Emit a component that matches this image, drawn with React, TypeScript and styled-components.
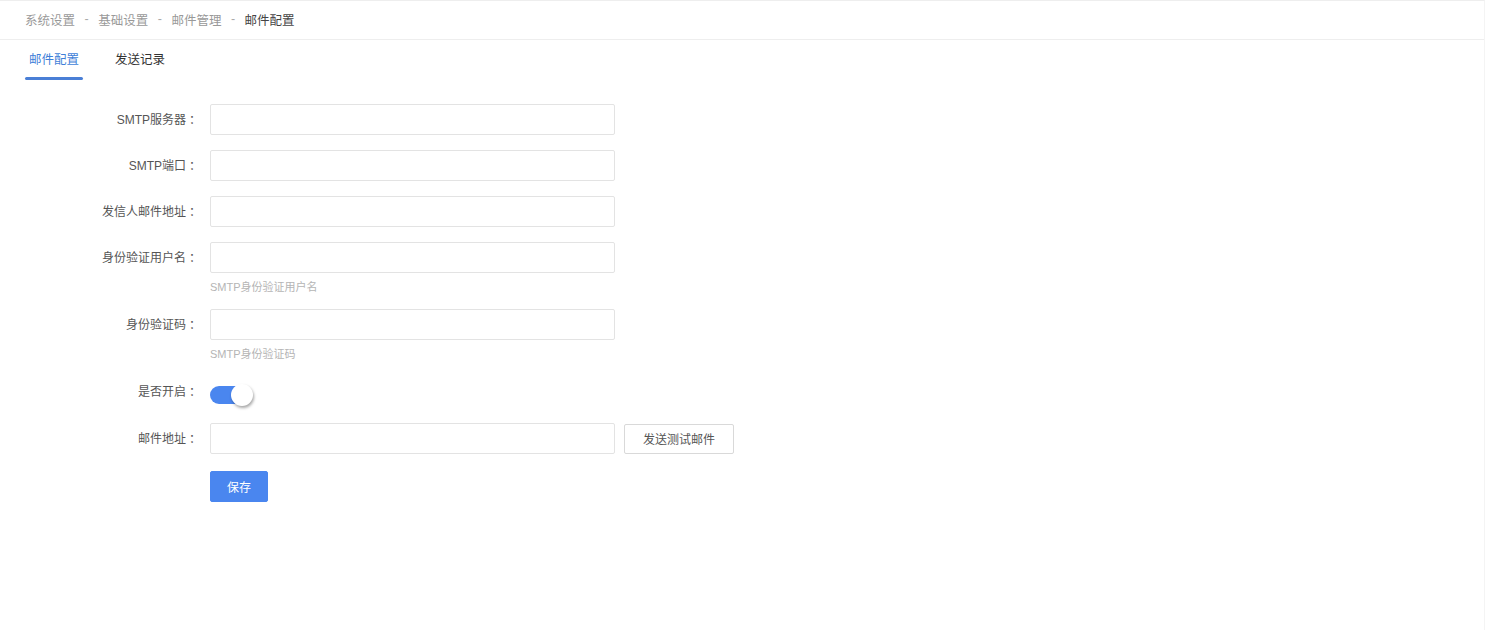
import React, { useState } from "react";
import styled, { createGlobalStyle } from "styled-components";

const Global = createGlobalStyle`
  html, body { margin: 0; padding: 0; background: #fff; }
  body { font-family: "Liberation Sans", "Noto Sans CJK SC", sans-serif; color: #333; }
  * { box-sizing: border-box; }
`;

const Page = styled.div`
  width: 1485px;
  min-height: 630px;
  border-top: 1px solid #eeeeee;
  border-right: 1px solid #f4f4f4;
`;

const Breadcrumb = styled.div`
  height: 39px;
  display: flex;
  align-items: center;
  padding-left: 25px;
  padding-bottom: 2px;
  font-size: 12.5px;
  border-bottom: 1px solid #eeeeee;
  color: #999;
`;

const Crumb = styled.span<{ $current?: boolean }>`
  color: ${(p) => (p.$current ? "#444" : "#999")};
`;

const Sep = styled.span`
  color: #aaa;
  margin: 0 9.5px;
`;

const Tabs = styled.div`
  display: flex;
  padding-left: 25px;
  height: 41px;
  gap: 28px;
`;

const Tab = styled.div<{ $active?: boolean }>`
  position: relative;
  font-size: 12.5px;
  padding: 9px 4px 0;
  color: ${(p) => (p.$active ? "#3f7fd8" : "#333")};
  cursor: pointer;
  &::after {
    content: "";
    display: ${(p) => (p.$active ? "block" : "none")};
    position: absolute;
    left: 0;
    right: 0;
    bottom: 1px;
    height: 3px;
    border-radius: 2px;
    background: #4a7fd6;
  }
`;

const Form = styled.div`
  padding-top: 23px;
  display: flex;
  flex-direction: column;
`;

const Row = styled.div<{ $mb?: number }>`
  display: flex;
  align-items: flex-start;
  margin-bottom: ${(p) => (p.$mb ?? 15)}px;
`;

const Label = styled.label`
  width: 198px;
  height: 31px;
  flex: none;
  display: flex;
  align-items: center;
  justify-content: flex-end;
  font-size: 12px;
  color: #555;
  line-height: 16px;
  white-space: nowrap;
`;

const Colon = styled.span`
  font-family: "Noto Sans CJK TC", "Noto Sans CJK SC", sans-serif;
  line-height: 16px;
`;

const Field = styled.div`
  margin-left: 12px;
  display: flex;
  flex-direction: column;
`;

const Inline = styled.div`
  display: flex;
  align-items: center;
  gap: 9px;
`;

const Input = styled.input`
  width: 405px;
  height: 31px;
  border: 1px solid #e3e3e3;
  border-radius: 2px;
  padding: 0 10px;
  font-size: 12px;
  outline: none;
  &:focus { border-color: #4a86ef; }
`;

const Help = styled.div`
  margin-top: 4px;
  line-height: 20px;
  font-size: 11px;
  color: #b5b5b5;
`;

const SwitchWrap = styled.div`
  height: 31px;
  display: flex;
  align-items: center;
  padding-top: 6px;
`;

const Track = styled.button<{ $on: boolean }>`
  position: relative;
  width: 42px;
  height: 18px;
  border: none;
  padding: 0;
  border-radius: 9px;
  background: ${(p) => (p.$on ? "#4a86ef" : "#dcdfe6")};
  cursor: pointer;
`;

const Knob = styled.span<{ $on: boolean }>`
  position: absolute;
  top: -2px;
  left: ${(p) => (p.$on ? "21px" : "-1px")};
  width: 22px;
  height: 22px;
  border-radius: 50%;
  background: #fff;
  box-shadow: 1px 2px 3px rgba(0, 0, 0, 0.35);
`;

const Button = styled.button<{ $primary?: boolean }>`
  height: ${(p) => (p.$primary ? 31 : 30)}px;
  padding: 0;
  font-size: 12px;
  font-family: inherit;
  border-radius: 2px;
  cursor: pointer;
  border: 1px solid ${(p) => (p.$primary ? "#4a86ef" : "#d9d9d9")};
  background: ${(p) => (p.$primary ? "#4a86ef" : "#fff")};
  color: ${(p) => (p.$primary ? "#fff" : "#555")};
`;

const SaveButton = styled(Button)`
  width: 58px;
`;

const TestButton = styled(Button)`
  width: 110px;
`;

const FieldLabel = ({ text }: { text: string }) => (
  <Label>
    <span>{text}</span>
    <Colon>：</Colon>
  </Label>
);

export default function App() {
  const [on, setOn] = useState(true);
  return (
    <>
      <Global />
      <Page>
        <Breadcrumb>
          <Crumb>系统设置</Crumb>
          <Sep>-</Sep>
          <Crumb>基础设置</Crumb>
          <Sep>-</Sep>
          <Crumb>邮件管理</Crumb>
          <Sep>-</Sep>
          <Crumb $current>邮件配置</Crumb>
        </Breadcrumb>
        <Tabs>
          <Tab $active>邮件配置</Tab>
          <Tab>发送记录</Tab>
        </Tabs>
        <Form>
          <Row>
            <FieldLabel text="SMTP服务器" />
            <Field><Input /></Field>
          </Row>
          <Row>
            <FieldLabel text="SMTP端口" />
            <Field><Input /></Field>
          </Row>
          <Row>
            <FieldLabel text="发信人邮件地址" />
            <Field><Input /></Field>
          </Row>
          <Row $mb={12}>
            <FieldLabel text="身份验证用户名" />
            <Field>
              <Input />
              <Help>SMTP身份验证用户名</Help>
            </Field>
          </Row>
          <Row $mb={12}>
            <FieldLabel text="身份验证码" />
            <Field>
              <Input />
              <Help>SMTP身份验证码</Help>
            </Field>
          </Row>
          <Row $mb={16}>
            <FieldLabel text="是否开启" />
            <Field>
              <SwitchWrap>
                <Track $on={on} onClick={() => setOn(!on)}>
                  <Knob $on={on} />
                </Track>
              </SwitchWrap>
            </Field>
          </Row>
          <Row $mb={17}>
            <FieldLabel text="邮件地址" />
            <Field>
              <Inline>
                <Input />
                <TestButton>发送测试邮件</TestButton>
              </Inline>
            </Field>
          </Row>
          <Row>
            <Label />
            <Field>
              <SaveButton $primary>保存</SaveButton>
            </Field>
          </Row>
        </Form>
      </Page>
    </>
  );
}
